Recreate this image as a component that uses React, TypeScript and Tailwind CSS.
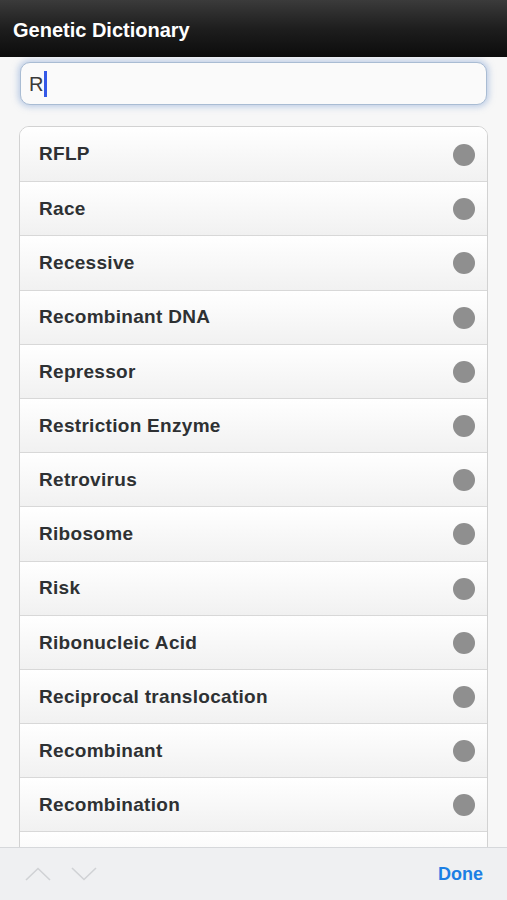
import React from 'react';

const TERMS = [
  'RFLP',
  'Race',
  'Recessive',
  'Recombinant DNA',
  'Repressor',
  'Restriction Enzyme',
  'Retrovirus',
  'Ribosome',
  'Risk',
  'Ribonucleic Acid',
  'Reciprocal translocation',
  'Recombinant',
  'Recombination',
  '',
];

const font = { fontFamily: '"Liberation Sans", Arial, sans-serif' };

export default function App() {
  return (
    <div className="h-[900px] w-full flex flex-col overflow-hidden bg-[#f7f7f7]" style={font}>
      {/* Header */}
      <div className="h-[57px] shrink-0 flex items-center px-[13px] pt-[3px] bg-gradient-to-b from-[#3b3b3b] via-[#1e1e1e] to-[#0c0c0c]">
        <h1 className="text-[20px] font-bold text-white">Genetic Dictionary</h1>
      </div>

      {/* Content */}
      <div className="flex-1 overflow-hidden px-[19px] pt-[5px]">
        <div className="h-[43px] mx-[1px] rounded-[10px] border border-[#a9bcd3] bg-[#fafafa] shadow-[0_0_6px_2px_rgba(140,170,215,0.55)] flex items-center px-[8px]">
          <span className="text-[20px] text-[#3a3a3a]">R</span>
          <span className="w-[3px] h-[26px] bg-[#3459e8] ml-[1px]" />
        </div>

        <div className="mt-[21px] rounded-[10px] border border-[#d2d2d2] bg-white overflow-hidden">
          {TERMS.map((term, i) => (
            <div
              key={i}
              className={
                'h-[54.2px] flex items-center justify-between pl-[19px] pr-[12px] pt-[1px] bg-gradient-to-b from-white to-[#f1f1f1]' +
                (i > 0 ? ' border-t border-[#d8d8d8]' : '')
              }
            >
              <span className="text-[19px] font-bold tracking-[0.3px] text-[#2e3133]">{term}</span>
              {term && <span className="w-[22px] h-[22px] rounded-full bg-[#8f8f8f]" />}
            </div>
          ))}
        </div>
      </div>

      {/* Bottom toolbar */}
      <div className="h-[53px] shrink-0 border-t border-[#d6d8db] bg-[#eff0f2] flex items-center justify-between pl-[25px] pr-[24px]">
        <div className="flex items-center gap-[20px]">
          <svg width="26" height="14" viewBox="0 0 26 14" fill="none">
            <path d="M1 13 L13 1.5 L25 13" stroke="#d0d2d5" strokeWidth="1.6" />
          </svg>
          <svg width="26" height="14" viewBox="0 0 26 14" fill="none">
            <path d="M1 1 L13 12.5 L25 1" stroke="#d0d2d5" strokeWidth="1.6" />
          </svg>
        </div>
        <span className="text-[18px] font-bold text-[#1c7fe4]">Done</span>
      </div>
    </div>
  );
}
